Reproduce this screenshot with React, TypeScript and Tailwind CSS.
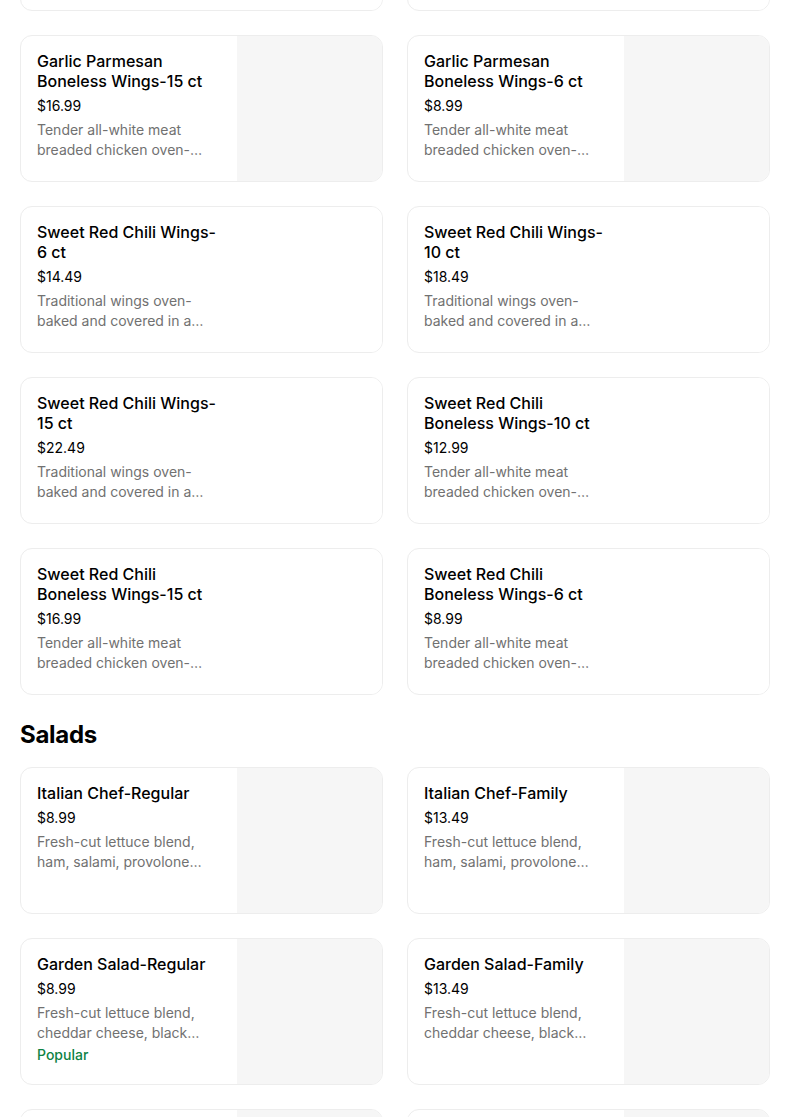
import React from "react";

type Item = {
  title: string;
  price: string;
  desc: string;
  image?: boolean;
  popular?: boolean;
};

const FONT = { fontFamily: "Inter, 'Noto Sans', sans-serif" };

function Card({ item }: { item: Item }) {
  return (
    <div className="flex h-[147px] w-[363px] overflow-hidden rounded-[12px] border border-[#ededed] bg-white">
      <div className="flex w-[216px] flex-col px-[16px] pt-[15px]">
        <div className="text-[16px] font-medium leading-[20px] text-black">{item.title}</div>
        <div className="mt-[5px] text-[14px] leading-[20px] text-black">{item.price}</div>
        <div className="mt-[4px] line-clamp-2 text-[14px] leading-[20px] text-[#717171]">{item.desc}</div>
        {item.popular && (
          <div className="mt-[2px] text-[14px] font-medium leading-[20px] text-[#0e8345]">Popular</div>
        )}
      </div>
      <div className={`h-full flex-1 ${item.image ? "bg-[#f6f6f6]" : "bg-white"}`} />
    </div>
  );
}

const tender = "Tender all-white meat breaded chicken oven-baked and tossed in your choice of sauce.";
const trad = "Traditional wings oven-baked and covered in a sweet red chili sauce.";

const wings: Item[] = [
  { title: "Garlic Parmesan Boneless Wings-10 ct", price: "$12.99", desc: tender },
  { title: "Garlic Parmesan Wings-15 ct", price: "$22.49", desc: trad },
  { title: "Garlic Parmesan Boneless Wings-15 ct", price: "$16.99", desc: tender, image: true },
  { title: "Garlic Parmesan Boneless Wings-6 ct", price: "$8.99", desc: tender, image: true },
  { title: "Sweet Red Chili Wings-6 ct", price: "$14.49", desc: trad },
  { title: "Sweet Red Chili Wings-10 ct", price: "$18.49", desc: trad },
  { title: "Sweet Red Chili Wings-15 ct", price: "$22.49", desc: trad },
  { title: "Sweet Red Chili Boneless Wings-10 ct", price: "$12.99", desc: tender },
  { title: "Sweet Red Chili Boneless Wings-15 ct", price: "$16.99", desc: tender },
  { title: "Sweet Red Chili Boneless Wings-6 ct", price: "$8.99", desc: tender },
];

const lettuceHam = "Fresh-cut lettuce blend, ham, salami, provolone cheese, black olives, tomatoes and pepperoncini.";
const lettuceCheddar = "Fresh-cut lettuce blend, cheddar cheese, black olives, tomatoes and croutons.";

const salads: Item[] = [
  { title: "Italian Chef-Regular", price: "$8.99", desc: lettuceHam, image: true },
  { title: "Italian Chef-Family", price: "$13.49", desc: lettuceHam, image: true },
  { title: "Garden Salad-Regular", price: "$8.99", desc: lettuceCheddar, image: true, popular: true },
  { title: "Garden Salad-Family", price: "$13.49", desc: lettuceCheddar, image: true },
  { title: "Caesar Salad-Regular", price: "$8.99", desc: "Fresh-cut romaine lettuce, parmesan cheese and croutons.", image: true },
  { title: "Caesar Salad-Family", price: "$13.49", desc: "Fresh-cut romaine lettuce, parmesan cheese and croutons.", image: true },
];

export default function App() {
  return (
    <div className="h-[1117px] w-[804px] overflow-hidden bg-white" style={FONT}>
      <div className="ml-[20px] mt-[-136px] w-[750px]">
        <div className="grid grid-cols-2 gap-[24px]">
          {wings.map((it, i) => (
            <Card key={i} item={it} />
          ))}
        </div>
        <h2 className="mb-[16px] mt-[24px] text-[24px] font-bold leading-[32px] tracking-[-0.3px] text-black">Salads</h2>
        <div className="grid grid-cols-2 gap-[24px]">
          {salads.map((it, i) => (
            <Card key={i} item={it} />
          ))}
        </div>
      </div>
    </div>
  );
}
